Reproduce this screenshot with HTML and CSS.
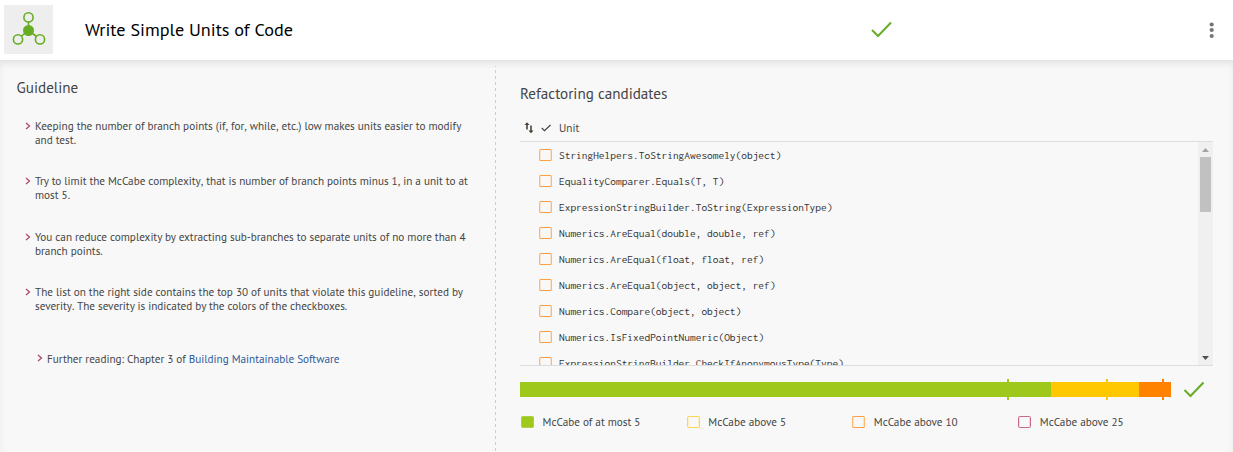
FILE: index.html
```html
<!DOCTYPE html>
<html lang="en">
<head>
<meta charset="utf-8">
<title>Write Simple Units of Code</title>
<link rel="stylesheet" href="styles.css">
</head>
<body>
<header class="header">
  <div class="logo">
    <svg width="49" height="49" viewBox="0 0 49 49" fill="none" stroke="#67ad23" stroke-width="1.6">
      <path d="M24.500 17V25M24.500 25.500L17 31.500M24.500 25.500L32.500 31.500"/>
      <circle cx="24.500" cy="25.500" r="4.700" fill="#67ad23"/>
      <circle cx="24.500" cy="12.400" r="4.600"/>
      <circle cx="14" cy="34.400" r="4.600"/>
      <circle cx="36" cy="34.400" r="4.600"/>
    </svg>
  </div>
  <h1 class="title">Write Simple Units of Code</h1>
  <svg class="status" width="22" height="18" viewBox="0 0 22 18" fill="none" stroke="#67ad23" stroke-width="2"><path d="M1 9L7 15L20 1.500"/></svg>
  <svg class="menu" width="6" height="18" viewBox="0 0 6 18" fill="#757575"><circle cx="2.700" cy="3.500" r="2.100"/><circle cx="2.700" cy="9" r="2.100"/><circle cx="2.700" cy="15" r="2.100"/></svg>
</header>
<main class="content">
  <section class="guideline">
    <h2 class="heading">Guideline</h2>
    <ul class="rules">
      <li class="rule"><svg class="chevron" width="6" height="8" viewBox="0 0 6 8"><path d="M1 1L4.500 4L1 7"/></svg><p>Keeping the number of branch points (if<span class="stop">,</span> for<span class="stop">,</span> while<span class="stop">,</span> etc.) low makes units easier to modify<br>and test.</p></li>
      <li class="rule"><svg class="chevron" width="6" height="8" viewBox="0 0 6 8"><path d="M1 1L4.500 4L1 7"/></svg><p>Try to limit the McCabe complexity<span class="stop">,</span> that is number of branch points minus 1<span class="stop">,</span> in a unit to at<br>most 5.</p></li>
      <li class="rule"><svg class="chevron" width="6" height="8" viewBox="0 0 6 8"><path d="M1 1L4.500 4L1 7"/></svg><p>You can reduce complexity by extracting sub-branches to separate units of no more than 4<br>branch points.</p></li>
      <li class="rule"><svg class="chevron" width="6" height="8" viewBox="0 0 6 8"><path d="M1 1L4.500 4L1 7"/></svg><p>The list on the right side contains the top 30 of units that violate this guideline<span class="stop">,</span> sorted by<br>severity<span class="stop">.</span> The severity is indicated by the colors of the checkboxes.</p></li>
      <li class="rule rule-reading"><svg class="chevron" width="6" height="8" viewBox="0 0 6 8"><path d="M1 1L4.500 4L1 7"/></svg><p>Further reading: Chapter 3 of <a class="link">Building Maintainable Software</a></p></li>
    </ul>
  </section>
  <section class="candidates">
    <h2 class="heading">Refactoring candidates</h2>
    <div class="table-head">
      <svg class="sort" width="10" height="12" viewBox="0 0 10 12" fill="#4a4038"><path d="M2.200 7.500V3H.5L3 .3L5.500 3H3.800V7.500zM6.200 3.500V8.500H4.500L7 11.200L9.500 8.500H7.800V3.500z"/></svg>
      <svg class="head-check" width="10" height="8" viewBox="0 0 10 8" fill="none" stroke="#444" stroke-width="1.200"><path d="M.7 4L3.500 6.700L9.500 1"/></svg>
      <span>Unit</span>
    </div>
    <div class="table">
      <ul class="units">
        <li class="unit"><i class="box"></i>StringHelpers.ToStringAwesomely(object)</li>
        <li class="unit"><i class="box"></i>EqualityComparer.Equals(T, T)</li>
        <li class="unit"><i class="box"></i>ExpressionStringBuilder.ToString(ExpressionType)</li>
        <li class="unit"><i class="box"></i>Numerics.AreEqual(double, double, ref)</li>
        <li class="unit"><i class="box"></i>Numerics.AreEqual(float, float, ref)</li>
        <li class="unit"><i class="box"></i>Numerics.AreEqual(object, object, ref)</li>
        <li class="unit"><i class="box"></i>Numerics.Compare(object, object)</li>
        <li class="unit"><i class="box"></i>Numerics.IsFixedPointNumeric(Object)</li>
        <li class="unit"><i class="box"></i>ExpressionStringBuilder.CheckIfAnonymousType(Type)</li>
      </ul>
      <div class="scrollbar">
        <svg width="7" height="4" viewBox="0 0 7 4" fill="#a3a3a3"><path d="M0 4L3.500 0L7 4z"/></svg>
        <div class="thumb"></div>
        <svg class="down" width="7" height="4" viewBox="0 0 7 4" fill="#505050"><path d="M0 0H7L3.500 4z"/></svg>
      </div>
    </div>
    <div class="rating">
      <div class="bar">
        <div class="segment green"><i class="tick tick-green"></i></div>
        <div class="segment yellow"><i class="tick tick-yellow"></i></div>
        <div class="segment orange"><i class="tick tick-orange"></i></div>
      </div>
      <svg width="22" height="18" viewBox="0 0 22 18" fill="none" stroke="#67ad23" stroke-width="2"><path d="M1.500 9L7.500 15L20.500 1.500"/></svg>
    </div>
    <div class="legend">
      <span class="key"><i class="box box-green"></i>McCabe of at most 5</span>
      <span class="key"><i class="box box-yellow"></i>McCabe above 5</span>
      <span class="key"><i class="box"></i>McCabe above 10</span>
      <span class="key"><i class="box box-red"></i>McCabe above 25</span>
    </div>
  </section>
</main>
</body>
</html>
```
FILE: styles.css
```css
* { box-sizing: border-box; margin: 0; padding: 0; }
body { width: 1233px; height: 452px; overflow: hidden; background: #f8f8f8; color: #444; font-family: "PT Sans", "Noto Sans", sans-serif; font-size: 11.200px; }
ul { list-style: none; }
svg { display: block; flex: none; }
h1, h2 { font-weight: 400; white-space: nowrap; }

.header { display: flex; align-items: center; height: 60px; padding-left: 4px; background: #fff; }
.logo { width: 49px; height: 49px; margin-bottom: 1px; background: #eee; }
.title { width: 785px; margin: 0 0 2px 32px; color: #000; font-size: 18.200px; line-height: 24px; }
.status { margin-left: 1px; }
.menu { margin-left: 316px; }

.content { display: flex; height: 392px; background: #f8f8f8; box-shadow: inset 0 7px 7px -4px #e0e0e0, inset 7px 0 6px -5px #f2f2f2, inset -7px 0 6px -5px #f2f2f2; }
.guideline { width: 496px; margin-top: 6px; padding: 12px 0 0 16.500px; background: repeating-linear-gradient(to bottom, #ccc 0 1px, transparent 1px 4px, #ccc 4px 6px) right top / 1px 100% no-repeat; }
.heading { font-size: 15.150px; line-height: 20px; }
.rules { padding: 21px 0 0 8.500px; }
.rule { display: flex; height: 55.400px; line-height: 14px; white-space: nowrap; }
.stop { letter-spacing: 0.010px; }
.chevron { margin: 3px 4px 0 0; fill: none; stroke: #b0486f; stroke-width: 1.300; }
.rule-reading { padding: 11px 0 0 12px; }
.rule-reading .chevron { margin-top: 2px; }
.link { color: #2a5a9c; }

.candidates { width: 693px; margin-left: 24px; padding-top: 24px; }
.table-head { display: flex; align-items: center; height: 20px; margin-top: 14px; padding-left: 4px; }
.head-check { margin: 0 8px 0 7px; }
.table { display: flex; height: 225px; margin-top: 3px; border-top: 1px solid #ddd; border-bottom: 1px solid #ddd; overflow: hidden; }
.units { flex: 1; }
.unit { display: flex; align-items: center; height: 26px; padding-left: 19px; color: #333; font: 11.400px "Inconsolata", "DejaVu Sans Mono", monospace; white-space: pre; }
.box { flex: none; width: 13px; height: 12px; margin-right: 7px; border: 1px solid #ff9f45; border-left-color: #ffb66f; border-right-color: #ffb66f; border-radius: 1.500px; box-shadow: inset 1px 0 #ffe3c8, inset -1px 0 #ffe3c8; }
.scrollbar { display: flex; flex-direction: column; align-items: center; width: 15px; padding: 6px 0 5px; background: #f0f0f0; }
.thumb { width: 11px; height: 55px; margin-top: 5px; background: #c1c1c1; }
.down { margin-top: auto; }

.rating { display: flex; align-items: center; gap: 12px; height: 18px; margin-top: 15px; }
.bar { display: grid; grid-template-columns: 531px 88px 32px; width: 651px; height: 15px; margin-bottom: 2px; }
.segment { position: relative; }
.tick { position: absolute; top: -3px; width: 2px; height: 21px; }
.green, .tick-green { background: #9ec91c; }
.yellow, .tick-yellow { background: #ffc800; }
.orange, .tick-orange { background: #ff8200; }
.tick-green { left: 487px; }
.tick-yellow { left: 55px; }
.tick-orange { left: 23px; }
.legend { display: grid; grid-template-columns: 165.700px 165.500px 166px 1fr; height: 14px; margin: 16px 0 0 1px; }
.key { display: flex; align-items: center; white-space: nowrap; }
.key .box { margin-right: 8.600px; }
.box-green { background: #9ec91c; border-color: #aed040; box-shadow: none; }
.box-yellow { border-color: #ffd54a; box-shadow: inset 1px 0 #fff0c0, inset -1px 0 #fff0c0; }
.box-red { border-color: #c9688a; box-shadow: inset 1px 0 #f0d5de, inset -1px 0 #f0d5de; }
```
